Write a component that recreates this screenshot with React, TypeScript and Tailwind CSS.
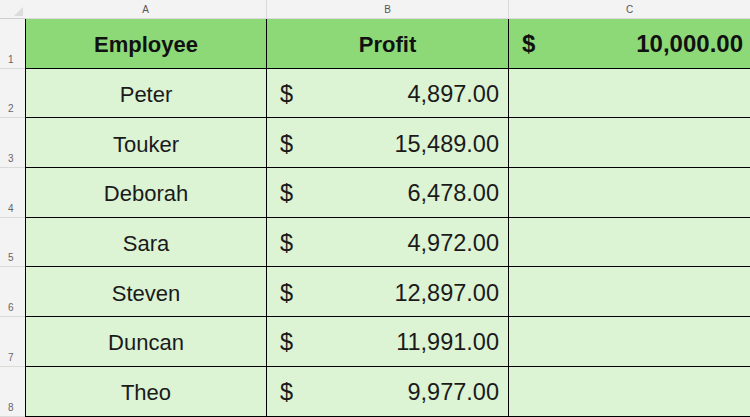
import React from "react";

const rows = [
  { name: "Peter", profit: "4,897.00" },
  { name: "Touker", profit: "15,489.00" },
  { name: "Deborah", profit: "6,478.00" },
  { name: "Sara", profit: "4,972.00" },
  { name: "Steven", profit: "12,897.00" },
  { name: "Duncan", profit: "11,991.00" },
  { name: "Theo", profit: "9,977.00" },
];

function RowNum({ n }: { n: number }) {
  return (
    <div className="h-[49.7px] bg-[#f3f3f3] border-b border-[#dadada] flex items-end pl-[8px] pb-[1px] text-[10px] text-[#666]">
      {n}
    </div>
  );
}

export default function App() {
  return (
    <div
      className="w-[750px] h-[417px] overflow-hidden bg-white"
      style={{ fontFamily: '"Liberation Sans", Arial, sans-serif' }}
    >
      <div className="grid grid-cols-[25px_242px_242px_242px]">
        {/* column letters */}
        <div className="h-[19px] bg-[#f3f3f3] border-b border-[#cfcfcf] relative">
          <div className="absolute right-[2px] bottom-[2px] w-0 h-0 border-l-[9px] border-l-transparent border-b-[9px] border-b-[#dcdcdc]" />
        </div>
        {["A", "B", "C"].map((c) => (
          <div
            key={c}
            className="h-[19px] bg-[#f3f3f3] border-b border-r border-[#dadada] flex items-center justify-center text-[10px] text-[#555]"
          >
            {c}
          </div>
        ))}

        {/* header row */}
        <RowNum n={1} />
        <div className="h-[49.7px] bg-[#8ed977] border-l border-r border-b border-black flex items-center justify-center pt-[2px] text-[22px] font-bold text-[#111]">
          Employee
        </div>
        <div className="h-[49.7px] bg-[#8ed977] border-r border-b border-black flex items-center justify-center pt-[2px] text-[22px] font-bold text-[#111]">
          Profit
        </div>
        <div className="h-[49.7px] bg-[#8ed977] border-b border-black flex items-center justify-between pl-[13px] pr-[8px] pt-[2px] text-[24px] font-bold text-[#111]">
          <span>$</span>
          <span>10,000.00</span>
        </div>

        {rows.map((r, i) => (
          <React.Fragment key={r.name}>
            <RowNum n={i + 2} />
            <div className="h-[49.7px] bg-[#dcf3d4] border-l border-r border-b border-black flex items-center justify-center pt-[3px] text-[22px] text-[#1a1a1a]">
              {r.name}
            </div>
            <div className="h-[49.7px] bg-[#dcf3d4] border-r border-b border-black flex items-center justify-between pl-[13px] pr-[9px] pt-[3px] text-[23.5px] text-[#1a1a1a]">
              <span>$</span>
              <span>{r.profit}</span>
            </div>
            <div className="h-[49.7px] bg-[#dcf3d4] border-b border-black" />
          </React.Fragment>
        ))}
      </div>
    </div>
  );
}
